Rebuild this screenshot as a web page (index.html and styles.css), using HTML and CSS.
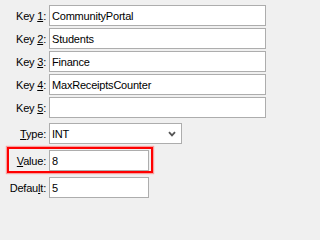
FILE: index.html
```html
<!DOCTYPE html>
<html>
<head>
<meta charset="utf-8">
<link rel="stylesheet" href="styles.css">
</head>
<body>
<div class="form">
  <div class="row"><label class="lbl">Key <u>1</u>:</label><div class="field wide">CommunityPortal</div></div>
  <div class="row"><label class="lbl">Key <u>2</u>:</label><div class="field wide">Students</div></div>
  <div class="row"><label class="lbl">Key <u>3</u>:</label><div class="field wide">Finance</div></div>
  <div class="row"><label class="lbl">Key <u>4</u>:</label><div class="field wide">MaxReceiptsCounter</div></div>
  <div class="row"><label class="lbl">Key <u>5</u>:</label><div class="field wide"></div></div>
  <div class="row type"><label class="lbl"><u>T</u>ype:</label><div class="field select"><span>INT</span>
    <svg class="chev" width="8" height="6" viewBox="0 0 8 6"><path d="M1 1.2 L4 4.4 L7 1.2" fill="none" stroke="#555" stroke-width="1.8"/></svg></div></div>
  <div class="row value"><label class="lbl"><u>V</u>alue:</label><div class="field short">8</div></div>
  <div class="row def"><label class="lbl">Defau<u>l</u>t:</label><div class="field short">5</div></div>
</div>
</body>
</html>
```
FILE: styles.css
```css
html, body {
  margin: 0;
  padding: 0;
  background: #f0f0f0;
  width: 271px;
  height: 202px;
  overflow: hidden;
}
.form {
  display: flex;
  flex-direction: column;
  gap: 2px;
  padding-top: 5px;
  font-family: "Liberation Sans", Arial, sans-serif;
  font-size: 11px;
  letter-spacing: -0.2px;
  color: #000;
}
.row {
  display: flex;
  align-items: center;
  height: 21px;
  position: relative;
}
.lbl {
  width: 46px;
  text-align: right;
  margin-right: 3px;
  color: #000;
}
.lbl u {
  text-decoration: underline;
  text-underline-offset: 1px;
}
.field {
  box-sizing: border-box;
  height: 21px;
  border: 1px solid #adadad;
  background: #fff;
  padding: 0 2px;
  display: flex;
  align-items: center;
}
.wide { width: 217px; }
.short { width: 100px; }
.select {
  width: 133px;
  height: 21px;
  justify-content: space-between;
  padding-right: 5px;
}
.chev { display: block; }
.type { margin-top: 3px; }
.value { margin-top: 4px; }
.def { margin-top: 4px; }
.value::before {
  content: "";
  position: absolute;
  left: 7px;
  top: -3px;
  width: 142px;
  height: 22px;
  border: 2px solid #ff0000;
  box-shadow: 0 0 1px 1px rgba(255, 80, 80, 0.5);
  pointer-events: none;
}
```
